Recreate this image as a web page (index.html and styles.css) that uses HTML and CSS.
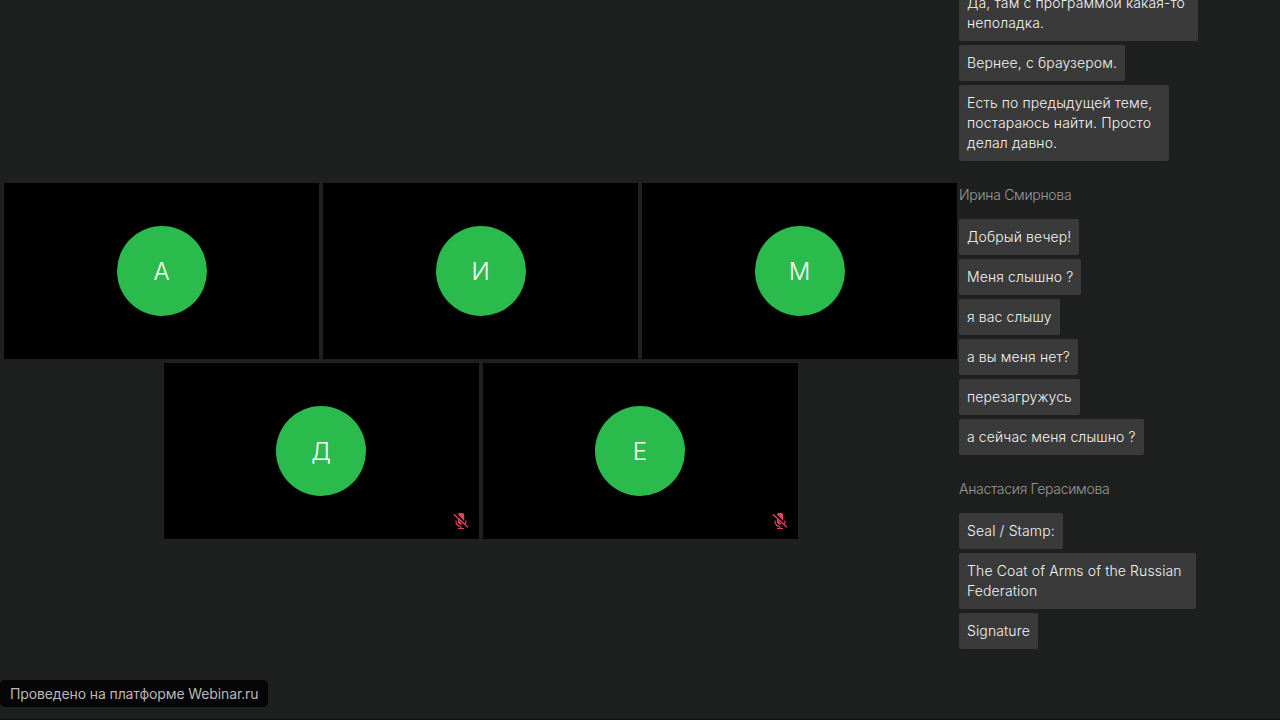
FILE: index.html
```html
<!DOCTYPE html>
<html lang="ru">
<head>
<meta charset="utf-8">
<title>Webinar</title>
<link rel="stylesheet" href="styles.css">
</head>
<body>
<div class="app">
  <main class="stage">
    <div class="row">
      <div class="tile"><div class="avatar">А</div></div>
      <div class="tile"><div class="avatar">И</div></div>
      <div class="tile"><div class="avatar">М</div></div>
    </div>
    <div class="row">
      <div class="tile"><div class="avatar">Д</div>
        <svg class="mic" viewBox="0 0 16 16" fill="none"><path d="M5 1.5a3.2 3.2 0 0 1 6.2 1v5.6z" fill="#e0435c"/><path d="M4.9 5.2v3.3a3.2 3.2 0 0 0 4.4 2.9z" fill="#e0435c"/><path d="M3 7.5v1A5 5 0 0 0 8 13.5m5-6v1c0 1-.3 1.9-.8 2.7M8 13.5V16M5 15.5h6" stroke="#e0435c" stroke-width="1.2"/><path d="M.8 1.2l14.2 13" stroke="#e0435c" stroke-width="1.4"/></svg>
      </div>
      <div class="tile"><div class="avatar">Е</div>
        <svg class="mic" viewBox="0 0 16 16" fill="none"><path d="M5 1.5a3.2 3.2 0 0 1 6.2 1v5.6z" fill="#e0435c"/><path d="M4.9 5.2v3.3a3.2 3.2 0 0 0 4.4 2.9z" fill="#e0435c"/><path d="M3 7.5v1A5 5 0 0 0 8 13.5m5-6v1c0 1-.3 1.9-.8 2.7M8 13.5V16M5 15.5h6" stroke="#e0435c" stroke-width="1.2"/><path d="M.8 1.2l14.2 13" stroke="#e0435c" stroke-width="1.4"/></svg>
      </div>
    </div>
    <div class="credit">Проведено на платформе Webinar.ru</div>
  </main>
  <aside class="chat">
    <div class="feed">
      <div class="group">
        <div class="msg wrap-a">Да, там с программой какая-то неполадка.</div>
        <div class="msg">Вернее, с браузером.</div>
        <div class="msg wrap-b">Есть по предыдущей теме, постараюсь найти. Просто делал давно.</div>
      </div>
      <div class="group">
        <div class="name">Ирина Смирнова</div>
        <div class="msg">Добрый вечер!</div>
        <div class="msg">Меня слышно ?</div>
        <div class="msg">я вас слышу</div>
        <div class="msg">а вы меня нет?</div>
        <div class="msg">перезагружусь</div>
        <div class="msg">а сейчас меня слышно ?</div>
      </div>
      <div class="group">
        <div class="name">Анастасия Герасимова</div>
        <div class="msg">Seal / Stamp:</div>
        <div class="msg wrap-c">The Coat of Arms of the Russian Federation</div>
        <div class="msg">Signature</div>
      </div>
    </div>
  </aside>
</div>
</body>
</html>
```
FILE: styles.css
```css
* { box-sizing: border-box; }
html, body { margin: 0; height: 100%; }
body { background: #1e201f; font-family: Inter, "Liberation Sans", sans-serif; overflow: hidden; }
.app { display: flex; height: 720px; border-bottom: 1px solid #101110; }
.stage { position: relative; width: 959px; flex: none; display: flex; flex-direction: column; justify-content: center; align-items: center; gap: 4px; padding: 3px 0 0 2px; }
.row { display: flex; gap: 4px; }
.tile { position: relative; width: 315px; height: 176px; background: #000; display: flex; align-items: center; justify-content: center; }
.avatar { width: 90px; height: 90px; border-radius: 50%; background: #2abb4c; color: #ffffff; font-size: 24px; font-weight: 300; display: flex; align-items: center; justify-content: center; }
.mic { position: absolute; right: 10px; bottom: 10px; width: 16px; height: 16px; }
.credit { position: absolute; left: 0; bottom: 12px; height: 27px; padding: 0 10px; background: #050505; border-radius: 5px; color: #b8b8b8; font-size: 14px; line-height: 27px; letter-spacing: -0.12px; }
.chat { flex: 1; height: 720px; overflow: hidden; padding-top: 3px; }
.feed { margin-top: -18px; width: 240px; }
.group { display: flex; flex-direction: column; align-items: flex-start; gap: 4px; margin-bottom: 24px; }
.msg { background: #3a3a3a; color: #f4f4f4; font-size: 14px; font-weight: 300; line-height: 20px; letter-spacing: 0.12px; padding: 8px; border-radius: 2px; }
.wrap-a { width: 239px; }
.wrap-b { width: 210px; }
.wrap-c { width: 237px; }
.name { color: #999999; font-size: 14px; font-weight: 300; line-height: 20px; margin-bottom: 10px; letter-spacing: -0.3px; }
```
